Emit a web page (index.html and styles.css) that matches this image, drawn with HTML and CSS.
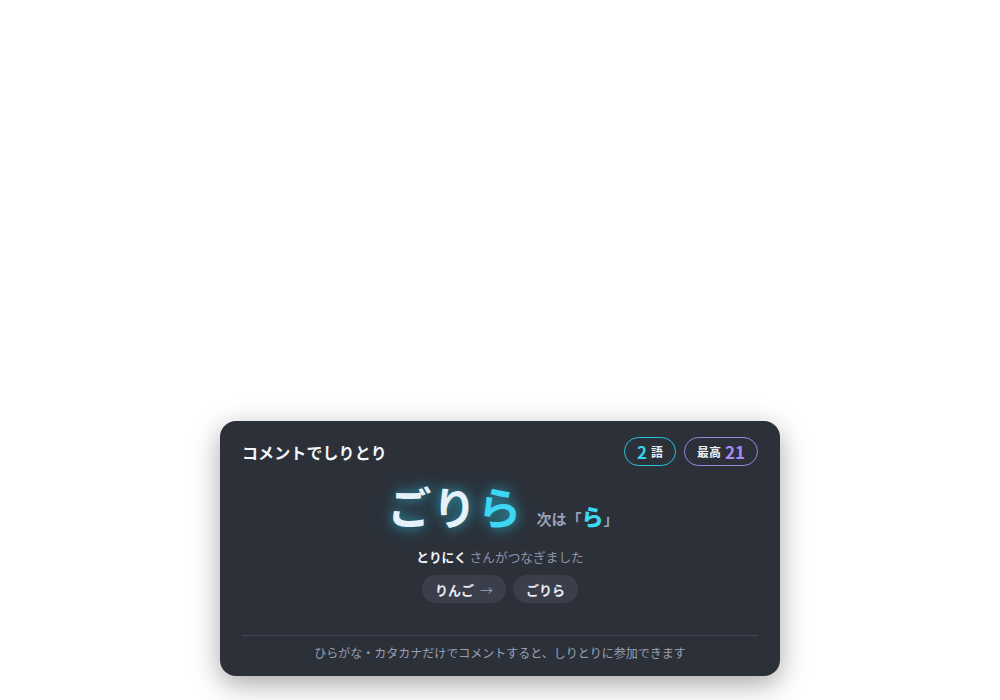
FILE: index.html
```html
<!DOCTYPE html>
<html lang="ja">
<head>
<meta charset="utf-8">
<link rel="stylesheet" href="styles.css">
</head>
<body>
<div class="card">
  <div class="header">
    <div class="title">コメントでしりとり</div>
    <div class="badges">
      <span class="badge count"><b>2</b> 語</span>
      <span class="badge best">最高 <b>21</b></span>
    </div>
  </div>
  <div class="current">
    <span class="word">ごり<span class="last">ら</span></span>
    <span class="next">次は「<b>ら</b>」</span>
  </div>
  <div class="by"><b>とりにく</b> さんがつなぎました</div>
  <div class="chain">
    <span class="chip">りんご <span class="arrow">→</span></span>
    <span class="chip">ごりら</span>
  </div>
  <div class="footer">ひらがな・カタカナだけでコメントすると、しりとりに参加できます</div>
</div>
</body>
</html>
```

FILE: styles.css
```css
* { box-sizing: border-box; }
html, body { margin: 0; padding: 0; }
body {
  width: 1000px;
  height: 700px;
  background: #ffffff;
  font-family: "Noto Sans CJK JP", "Noto Sans", sans-serif;
  display: flex;
  flex-direction: column;
  justify-content: flex-end;
  align-items: center;
  padding-bottom: 24px;
}
.card {
  width: 560px;
  background: #2c3039;
  border-radius: 16px;
  padding: 16px 22px 15px;
  box-shadow: 0 8px 28px rgba(0,0,0,0.35);
  color: #f2f4f8;
}
.header {
  display: flex;
  justify-content: space-between;
  align-items: center;
}
.title {
  font-size: 16px;
  font-weight: 700;
  color: #f4f6fa;
  letter-spacing: 0.1px;
}
.badges { display: flex; gap: 8px; }
.badge {
  height: 29px;
  border-radius: 15px;
  padding: 0 12px;
  display: flex;
  align-items: center;
  gap: 4px;
  font-size: 12px;
  font-weight: 700;
  color: #eef0f5;
}
.badge b { font-size: 17px; font-weight: 700; line-height: 1; }
.count { border: 1px solid #22c8e0; }
.count b { color: #36d3ee; }
.best { border: 1px solid #9b86e0; }
.best b { color: #a58cf0; }
.current {
  display: flex;
  justify-content: center;
  align-items: baseline;
  gap: 14px;
  margin-top: 14px;
  margin-left: 6px;
}
.word {
  font-size: 44px;
  font-weight: 700;
  line-height: 1.2;
  color: #e6f2fb;
  letter-spacing: 1px;
  text-shadow: 0 0 12px rgba(40,200,230,0.7), 0 0 24px rgba(40,200,230,0.35);
}
.last { color: #3dd6f3; }
.next {
  font-size: 15px;
  font-weight: 700;
  color: #9aa2b8;
}
.next b { font-size: 22px; color: #3dd6f3; }
.by {
  text-align: center;
  font-size: 12.7px;
  color: #8d94a8;
  margin-top: 14px;
}
.by b { color: #f2f4f8; font-weight: 700; }
.chain {
  display: flex;
  justify-content: center;
  gap: 7px;
  margin-top: 9px;
}
.chip {
  height: 28px;
  border-radius: 14px;
  background: #3b3e4b;
  padding: 0 13px;
  display: flex;
  align-items: center;
  font-size: 13px;
  font-weight: 700;
  color: #eceef3;
}
.arrow { color: #8d94a8; font-weight: 400; margin-left: 6px; }
.footer {
  margin-top: 32px;
  border-top: 1px solid #424654;
  padding-top: 8px;
  text-align: center;
  font-size: 12px;
  color: #9aa0b4;
}
```
